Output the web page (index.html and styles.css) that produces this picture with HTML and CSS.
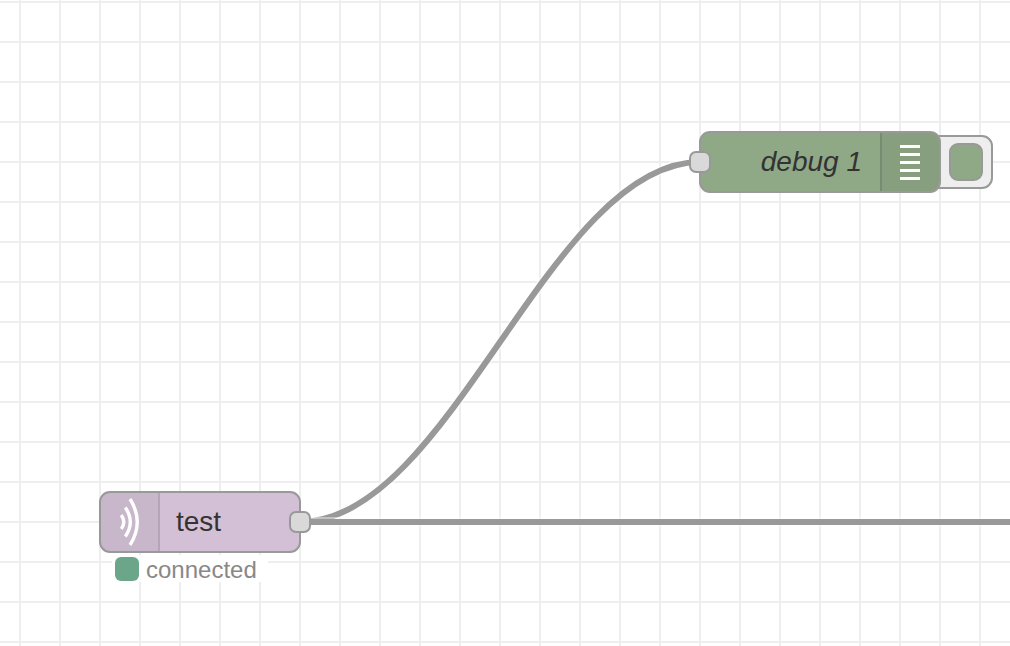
FILE: index.html
```html
<!DOCTYPE html>
<html lang="en">
<head>
<meta charset="utf-8">
<title>Flow editor</title>
<link rel="stylesheet" href="styles.css">
</head>
<body>
<main class="canvas">
  <svg class="wires" aria-hidden="true">
    <path class="wire-outline" d="M300 522C450 522 550 162 700 162"/>
    <path class="wire" d="M300 522C450 522 550 162 700 162"/>
    <line class="wire-outline" x1="300" y1="522" x2="100%" y2="522"/>
    <line class="wire" x1="300" y1="522" x2="100%" y2="522"/>
  </svg>

  <section class="node node-debug">
    <span class="port port-in"></span>
    <span class="label label-right">debug 1</span>
    <span class="icon icon-right">
      <svg width="20" height="60" viewBox="0 0 20 60" aria-hidden="true">
        <path fill="#fff" d="M0 13h20v3H0zM0 21h20v3H0zM0 29h20v3H0zM0 37h20v3H0zM0 45h20v3H0z"/>
      </svg>
    </span>
  </section>
  <div class="toggle-tray">
    <button class="toggle" type="button" aria-label="Toggle debug output"></button>
  </div>

  <section class="node node-mqtt">
    <span class="icon icon-left">
      <svg width="40" height="60" viewBox="0 0 40 60" aria-hidden="true">
        <g fill="none" stroke="#fff" stroke-width="3.400">
          <path d="M11.300 23Q16.300 30 11.300 37"/>
          <path d="M15.300 15.500Q25.300 30 15.300 44.500"/>
          <path d="M20 7Q34.500 30 20 53"/>
        </g>
      </svg>
    </span>
    <span class="label">test</span>
    <span class="port port-out"></span>
  </section>
  <div class="status"><span class="status-dot"></span><span class="status-text">connected</span></div>
</main>
</body>
</html>
```
FILE: styles.css
```css
* {
  box-sizing: border-box;
}

body {
  margin: 0;
  font-family: "Liberation Sans", Helvetica, Arial, sans-serif;
  color: #333;
}

.canvas {
  position: relative;
  min-height: 100vh;
  overflow: hidden;
  background-color: #fff;
  background-image:
    linear-gradient(90deg, #eee 2px, transparent 2px),
    linear-gradient(#eee 2px, transparent 2px);
  background-size: 40px 40px;
  background-position: 19px 1px;
}

.wires {
  position: absolute;
  inset: 0;
  width: 100%;
  height: 100%;
}

.wire,
.wire-outline {
  fill: none;
  stroke: #999;
  stroke-width: 6px;
}

.wire-outline {
  stroke: #fff;
  stroke-width: 10px;
  opacity: 0.4;
}

.node {
  position: absolute;
  z-index: 1;
  display: flex;
  height: 62px;
  border: 2px solid #999;
  border-radius: 11px;
  font-size: 28px;
  line-height: 58px;
}

.node-debug {
  left: 699px;
  top: 131px;
  width: 242px;
  background: #8fa886;
}

.node-mqtt {
  left: 99px;
  top: 491px;
  width: 202px;
  background: #d3c0d6;
}

.label {
  flex: 1;
  padding: 0 16px;
}

.label-right {
  padding: 0 18px;
  text-align: right;
  font-style: italic;
}

.icon {
  display: flex;
  align-items: center;
  width: 59px;
  background: rgba(0, 0, 0, 0.05);
}

.icon-left {
  padding-left: 9px;
  border-right: 2px solid rgba(0, 0, 0, 0.1);
  border-radius: 9px 0 0 9px;
}

.icon-right {
  padding-left: 18px;
  border-left: 2px solid rgba(0, 0, 0, 0.12);
  border-radius: 0 9px 9px 0;
}

.port {
  position: absolute;
  top: 18px;
  width: 22px;
  height: 22px;
  border: 2px solid #999;
  border-radius: 7px;
  background: #d9d9d9;
}

.port-in {
  left: -12px;
}

.port-out {
  right: -12px;
}

.toggle-tray {
  position: absolute;
  left: 929px;
  top: 135px;
  display: flex;
  align-items: center;
  justify-content: flex-end;
  width: 64px;
  height: 54px;
  padding-right: 8px;
  border: 2px solid #999;
  border-radius: 11px;
  background: #eee;
}

.toggle {
  width: 34px;
  height: 38px;
  padding: 0;
  border: 2px solid #999;
  border-radius: 9px;
  background: #8fa886;
}

.status {
  position: absolute;
  left: 112px;
  top: 555px;
  display: flex;
  align-items: center;
  gap: 7px;
  width: 156px;
  height: 27px;
  padding-left: 3px;
  background: #fff;
  color: #888;
  font-size: 24px;
  line-height: 28px;
}

.status-dot {
  width: 24px;
  height: 24px;
  border-radius: 6px;
  background: #6ba68a;
}

.status-text {
  padding-top: 2px;
}
```
